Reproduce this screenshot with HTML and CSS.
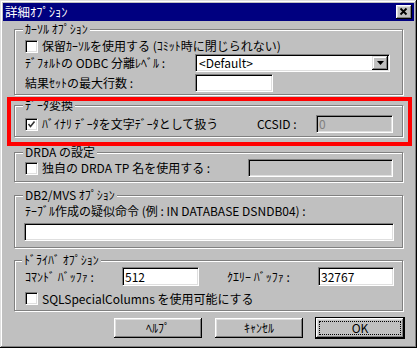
FILE: index.html
```html
<!DOCTYPE html>
<html lang="ja">
<head>
<meta charset="utf-8">
<title>詳細ｵﾌﾟｼｮﾝ</title>
<link rel="stylesheet" href="styles.css">
</head>
<body>
<div class="window">
  <div class="titlebar">
    <span class="title">詳細ｵﾌﾟｼｮﾝ</span>
    <span class="close"><svg width="16" height="14" viewBox="0 0 16 14"><path d="M4.5 3.5 L10.5 9.5 M10.5 3.5 L4.5 9.5" stroke="#000" stroke-width="1.8" fill="none"/></svg></span>
  </div>
  <div class="content">
    <div class="group g1">
      <div class="legend">ｶｰｿﾙ ｵﾌﾟｼｮﾝ</div>
      <div class="row r1-1"><span class="cb"></span><span class="cb-label">保留ｶｰｿﾙを使用する (ｺﾐｯﾄ時に閉じられない)</span></div>
      <div class="row r1-2"><span class="lbl w170">ﾃﾞﾌｫﾙﾄの ODBC 分離ﾚﾍﾞﾙ :</span>
        <div class="field combo"><span class="combo-text">&lt;Default&gt;</span><span class="combo-btn"><svg width="7" height="4" viewBox="0 0 7 4"><path d="M0 0 H7 L3.5 4 Z" fill="#000"/></svg></span></div>
      </div>
      <div class="row r1-3"><span class="lbl w170">結果ｾｯﾄの最大行数 :</span><span class="field w78"></span></div>
    </div>

    <div class="group g2">
      <div class="legend">ﾃﾞｰﾀ変換</div>
      <div class="row r2-1">
        <span class="cb"><svg width="11" height="11" viewBox="0 0 11 11"><path d="M2.5 5 L4.5 7.5 L8.5 2.5" stroke="#333" stroke-width="1.6" fill="none"/></svg></span>
        <span class="cb-label">ﾊﾞｲﾅﾘ ﾃﾞｰﾀを文字ﾃﾞｰﾀとして扱う</span>
        <span class="lbl ccsid">CCSID :</span>
        <span class="field disabled w77"><span class="gray">0</span></span>
      </div>
    </div>

    <div class="group g3">
      <div class="legend">DRDA の設定</div>
      <div class="row r3-1">
        <span class="cb"></span>
        <span class="cb-label">独自の DRDA TP 名を使用する :</span>
        <span class="field disabled w145 push"></span>
      </div>
    </div>

    <div class="group g4">
      <div class="legend">DB2/MVS ｵﾌﾟｼｮﾝ</div>
      <div class="row r4-1"><span class="lbl">ﾃｰﾌﾞﾙ作成の疑似命令 (例 : IN DATABASE DSNDB04) :</span></div>
      <div class="row r4-2"><span class="field w370"></span></div>
    </div>

    <div class="group g5">
      <div class="legend l5">ﾄﾞﾗｲﾊﾞ ｵﾌﾟｼｮﾝ</div>
      <div class="row r5-1">
        <span class="lbl w97">ｺﾏﾝﾄﾞ ﾊﾞｯﾌｧ :</span>
        <span class="field w77">512</span>
        <span class="lbl w91 ml28">ｸｴﾘｰ ﾊﾞｯﾌｧ :</span>
        <span class="field w76">32767</span>
      </div>
      <div class="row r5-2"><span class="cb"></span><span class="cb-label">SQLSpecialColumns を使用可能にする</span></div>
    </div>

    <div class="buttons">
      <span class="btn">ﾍﾙﾌﾟ</span>
      <span class="btn">ｷｬﾝｾﾙ</span>
      <span class="btn ok">OK</span>
    </div>
  </div>
  <div class="highlight"></div>
</div>
</body>
</html>
```

FILE: styles.css
```css
* { box-sizing: border-box; }
html, body { margin: 0; padding: 0; }
body {
  font-family: "Noto Sans CJK JP", "Noto Sans", sans-serif;
  font-size: 12px;
  line-height: 14px;
  color: #000;
  background: #c0c0c0;
}
.window {
  position: relative;
  width: 417px;
  height: 348px;
  background: #c0c0c0;
  padding: 3px;
  box-shadow: inset -1px -1px #000, inset 1px 1px #dfdfdf, inset -2px -2px #808080, inset 2px 2px #fff;
}
.titlebar {
  height: 18px;
  background: #000080;
  color: #fff;
  display: flex;
  align-items: center;
  justify-content: space-between;
  padding: 0 2px;
}
.title { white-space: nowrap; font-size: 12.5px; }
.close {
  width: 16px;
  height: 14px;
  background: #c0c0c0;
  box-shadow: inset -1px -1px #000, inset 1px 1px #fff, inset -2px -2px #808080, inset 2px 2px #dfdfdf;
  display: flex;
}
.content {
  padding: 0 11px;
  display: flex;
  flex-direction: column;
}
.group {
  border: 1px solid #808080;
  box-shadow: inset 1px 1px #fff, 1px 1px #fff;
  padding: 0 9px 0 10px;
  display: flex;
  flex-direction: column;
}
.legend {
  display: block;
  width: fit-content;
  height: 14px;
  margin: -8px 0 0 -2px;
  padding: 0 2px;
  background: #c0c0c0;
  white-space: nowrap;
}
.legend.l5 { margin-left: -3px; }
.g1 { margin-top: 8px; padding-bottom: 2px; }
.g2 { margin-top: 10px; padding-bottom: 3px; }
.g3 { margin-top: 15px; padding-bottom: 4px; }
.g4 { margin-top: 13px; padding-bottom: 6px; }
.g5 { margin-top: 12px; padding-bottom: 3px; }

.row { display: flex; align-items: center; white-space: nowrap; }
.r1-1 { margin-top: 2px; height: 16px; }
.r1-2 { height: 18px; }
.r1-3 { margin-top: 2px; height: 18px; }
.r2-1 { margin-top: 3px; height: 18px; }
.r3-1 { height: 18px; }
.r4-1 { height: 18px; }
.r4-2 { margin-top: 3px; height: 18px; margin-left: -1px; }
.r5-1 { height: 19px; }
.r5-2 { margin-top: 4px; height: 17px; }

.cb {
  flex: none;
  width: 13px;
  height: 13px;
  background: #fff;
  border: 1px solid;
  border-color: #808080 #fff #fff #808080;
  box-shadow: inset 1px 1px #000, inset -1px -1px #dfdfdf;
  display: flex;
  align-items: center;
  justify-content: center;
}
.cb-label { margin-left: 4px; }
.lbl { flex: none; }
.w170 { width: 170px; }
.w97 { width: 97px; }
.w91 { width: 91px; }
.ml28 { margin-left: 28px; }
.ccsid { margin-left: auto; width: 59px; }
.push { margin-left: auto; }

.field {
  flex: none;
  height: 18px;
  background: #fff;
  border: 1px solid;
  border-color: #808080 #fff #fff #808080;
  box-shadow: inset 1px 1px #000, inset -1px -1px #dfdfdf;
  padding: 0 2px;
  display: flex;
  align-items: center;
}
.r5-1 .field { height: 19px; }
.field.disabled { background: #c0c0c0; }
.gray { color: #808080; }
.w78 { width: 78px; }
.w77 { width: 77px; }
.w76 { width: 76px; }
.w145 { width: 145px; }
.w370 { width: 370px; }

.combo {
  width: 195px;
  padding: 0 1px 0 3px;
  justify-content: space-between;
}
.combo-btn {
  width: 16px;
  height: 14px;
  background: #c0c0c0;
  box-shadow: inset -1px -1px #000, inset 1px 1px #dfdfdf, inset -2px -2px #808080, inset 2px 2px #fff;
  display: flex;
  align-items: center;
  justify-content: center;
}

.buttons {
  margin-top: 7px;
  margin-right: -1px;
  display: flex;
  justify-content: flex-end;
  gap: 13px;
}
.btn {
  width: 88px;
  height: 20px;
  display: flex;
  align-items: center;
  justify-content: center;
  background: #c0c0c0;
  box-shadow: inset -1px -1px #000, inset 1px 1px #fff, inset -2px -2px #808080, inset 2px 2px #dfdfdf;
}
.btn.ok {
  box-shadow: 0 0 0 1px #000, inset -1px -1px #000, inset 1px 1px #fff, inset -2px -2px #808080, inset 2px 2px #dfdfdf;
  outline: 1px dotted #000;
  outline-offset: -4px;
}

.highlight {
  position: absolute;
  left: 7px;
  top: 97px;
  width: 405px;
  height: 49px;
  border: 4px solid #ff0000;
  pointer-events: none;
}
```
